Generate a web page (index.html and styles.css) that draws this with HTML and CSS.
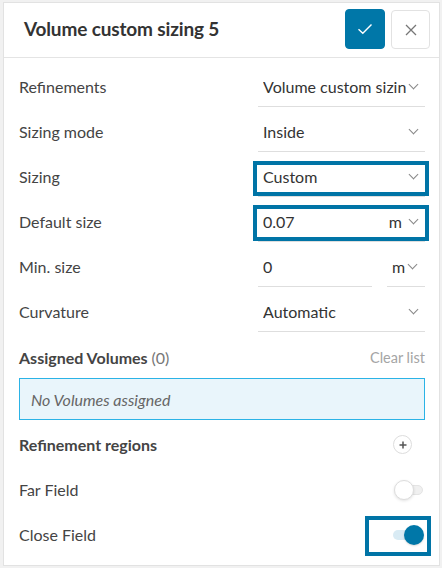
FILE: index.html
```html
<!DOCTYPE html>
<html>
<head>
<meta charset="utf-8">
<link rel="stylesheet" href="styles.css">
</head>
<body>
<div class="panel">
  <div class="header">
    <div class="title">Volume custom sizing 5</div>
    <div class="actions">
      <button class="btn btn-ok"><svg width="16" height="12" viewBox="0 0 16 12"><path d="M1.5 6.2 L5.8 10.3 L14.5 1.5" fill="none" stroke="#fff" stroke-width="1.4"/></svg></button>
      <button class="btn btn-close"><svg width="12" height="12" viewBox="0 0 12 12"><path d="M1 1 L11 11 M11 1 L1 11" fill="none" stroke="#777" stroke-width="1.3"/></svg></button>
    </div>
  </div>
  <div class="content">
    <div class="row">
      <div class="label">Refinements</div>
      <div class="select"><span class="val clip">Volume custom sizing 5</span><span class="chev"></span></div>
    </div>
    <div class="row">
      <div class="label">Sizing mode</div>
      <div class="select"><span class="val">Inside</span><span class="chev"></span></div>
    </div>
    <div class="row">
      <div class="label">Sizing</div>
      <div class="select marked mark-a"><span class="val">Custom</span><span class="chev"></span></div>
    </div>
    <div class="row">
      <div class="label">Default size</div>
      <div class="select marked mark-b"><span class="val">0.07</span><span class="unit">m</span><span class="chev"></span></div>
    </div>
    <div class="row">
      <div class="label">Min. size</div>
      <div class="split">
        <div class="input"><span class="val">0</span></div>
        <div class="select small"><span class="unit">m</span><span class="chev"></span></div>
      </div>
    </div>
    <div class="row">
      <div class="label">Curvature</div>
      <div class="select"><span class="val">Automatic</span><span class="chev"></span></div>
    </div>

    <div class="assigned-head">
      <div class="section-title">Assigned Volumes <span class="count">(0)</span></div>
      <div class="clear">Clear list</div>
    </div>
    <div class="empty-box">No Volumes assigned</div>

    <div class="row">
      <div class="section-title">Refinement regions</div>
      <div class="plus"><svg width="8" height="8" viewBox="0 0 8 8"><path d="M4 0.5 V7.5 M0.5 4 H7.5" stroke="#555" stroke-width="1.5"/></svg></div>
    </div>
    <div class="row">
      <div class="label">Far Field</div>
      <div class="toggle off"><span class="track"></span><span class="knob"></span></div>
    </div>
    <div class="row">
      <div class="label">Close Field</div>
      <div class="toggle on marked mark-c"><span class="track"></span><span class="knob"></span></div>
    </div>
  </div>
</div>
</body>
</html>
```
FILE: styles.css
```css
* { box-sizing: border-box; }
html, body { margin: 0; }
body {
  background: #f1f1f1;
  padding: 2px 0 0 3px;
  font-family: Lato, "Open Sans", Arial, sans-serif;
  color: #444;
  width: 442px;
  height: 568px;
  overflow: hidden;
}
.panel {
  width: 437px;
  height: 564px;
  background: #fff;
  border: 1px solid #e2e2e2;
}
.header {
  height: 55px;
  border-bottom: 1px solid #e4e4e4;
  display: flex;
  align-items: flex-start;
  justify-content: space-between;
  padding: 6px 9px 0 20px;
}
.title {
  font-size: 19px;
  font-weight: 700;
  color: #333;
  line-height: 40px;
  letter-spacing: -0.15px;
}
.actions { display: flex; gap: 6px; }
.btn {
  width: 39px;
  height: 39px;
  border-radius: 4px;
  padding: 0;
  display: flex;
  align-items: center;
  justify-content: center;
  cursor: pointer;
}
.btn-ok { background: #0077a8; border: 1px solid #0077a8; width: 40px; height: 40px; }
.btn-close { background: #fff; border: 1px solid #e2e2e2; margin-top: 1px; }

.content { padding: 6px 14px 0 15px; }
.row {
  height: 45px;
  display: flex;
  align-items: center;
  justify-content: space-between;
}
.label { font-size: 16px; color: #444; }
.select, .input {
  position: relative;
  width: 167px;
  height: 40px;
  border-bottom: 1px solid #dedede;
  display: flex;
  align-items: center;
  padding: 1px 6px 0 5px;
  font-size: 16px;
  color: #333;
}
.val { flex: 1; white-space: nowrap; overflow: hidden; }
.val.clip { text-overflow: clip; }
.unit { margin-right: 4px; }
.chev {
  width: 7px;
  height: 7px;
  border-right: 1px solid #888;
  border-bottom: 1px solid #888;
  transform: rotate(45deg);
  margin: -5px 2px 0 4px;
  flex: none;
}
.split { display: flex; gap: 15px; width: 167px; }
.input { width: 114px; }
.select.small { width: 38px; padding-left: 5px; }
.select.small .unit { margin-right: 0; }

.marked::after {
  content: "";
  position: absolute;
  border: 4px solid #0074a6;
  pointer-events: none;
}
.mark-a::after { left: -5px; right: -4px; top: 4px; bottom: 0; }
.mark-b::after { left: -5px; right: -4px; top: 3px; bottom: 0; }
.mark-c::after { left: -29px; right: -7px; top: -9px; bottom: -11px; }

.assigned-head {
  margin-top: 11px;
  height: 24px;
  display: flex;
  align-items: center;
  justify-content: space-between;
}
.section-title { font-size: 16px; font-weight: 700; color: #444; }
.count { font-weight: 400; color: #777; }
.clear { font-size: 14.5px; color: #a5a5a5; }
.empty-box {
  margin-top: 9px;
  height: 42px;
  border: 1px solid #2bb3e6;
  background: #e9f5fb;
  display: flex;
  align-items: center;
  padding-left: 11px;
  font-style: italic;
  font-size: 16px;
  color: #666;
}
.empty-box + .row { margin-top: 2px; }
.plus {
  width: 19px;
  height: 19px;
  border-radius: 50%;
  border: 1px solid #ddd;
  display: flex;
  align-items: center;
  justify-content: center;
  margin-right: 13px;
}
.toggle {
  position: relative;
  width: 30px;
  height: 20px;
  margin-right: 1px;
}
.track {
  position: absolute;
  left: 1px;
  right: 0;
  top: 5px;
  height: 10px;
  border-radius: 5px;
}
.knob {
  position: absolute;
  top: 0;
  width: 20px;
  height: 20px;
  border-radius: 50%;
}
.off .track { background: #f0f0f0; border: 1px solid #e4e4e4; left: 4px; right: 1px; }
.off .knob { left: 0; background: #fff; border: 1px solid #ddd; box-shadow: 0 1px 3px rgba(0,0,0,0.12); }
.on .track { background: #d9ebf4; left: -1px; right: 4px; }
.on .knob { right: 0; background: #0077a8; box-shadow: 0 1px 2px rgba(0,0,0,0.15); }
```
